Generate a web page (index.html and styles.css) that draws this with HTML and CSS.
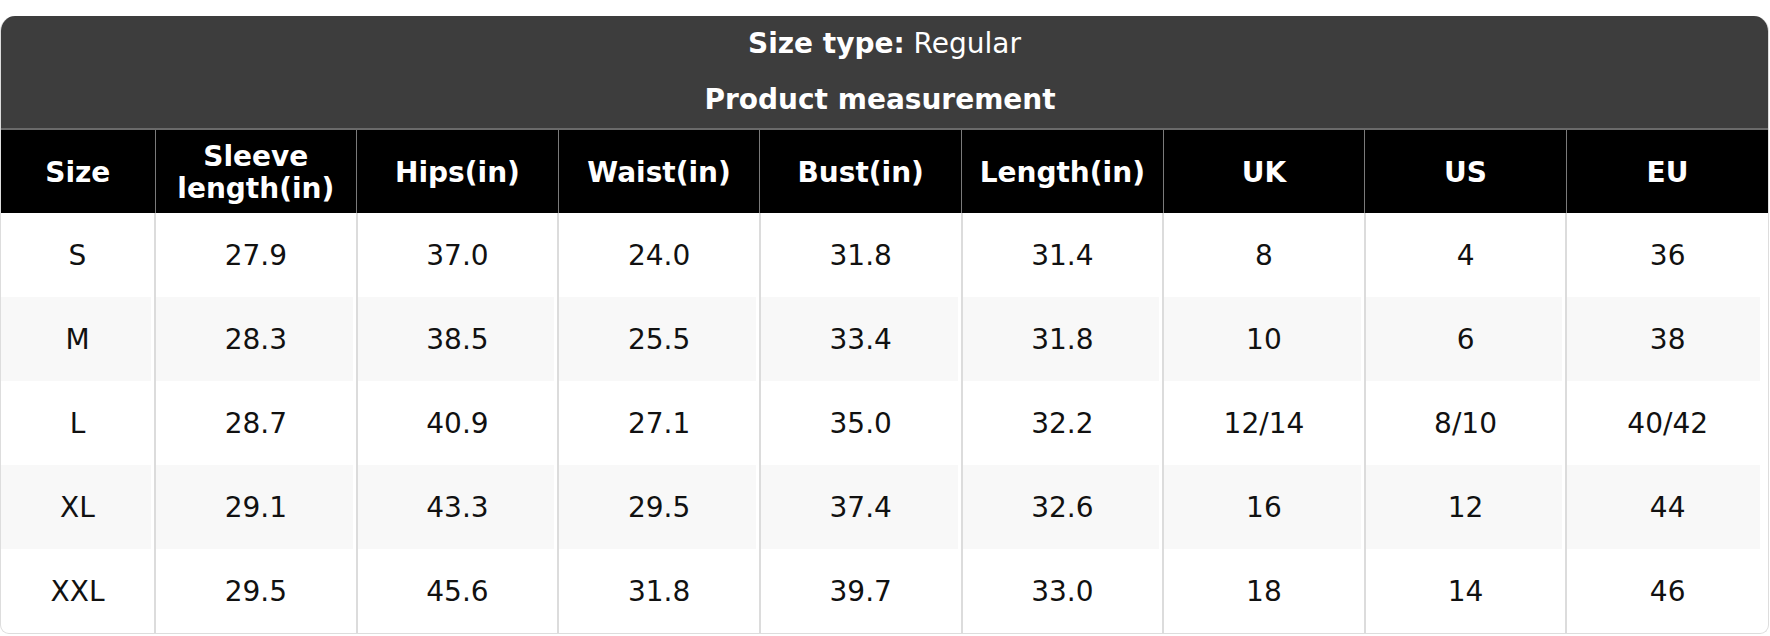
FILE: index.html
```html
<!DOCTYPE html>
<html lang="en">
<head>
<meta charset="utf-8">
<title>Size chart</title>
<link rel="stylesheet" href="styles.css">
</head>
<body>
<div class="card">
  <div class="title">
    <div class="title-line"><b>Size type:</b> Regular</div>
    <div class="title-line"><b>Product measurement</b>&nbsp;</div>
  </div>
  <table class="chart">
    <colgroup>
      <col class="col-size">
      <col><col><col><col><col><col><col><col>
    </colgroup>
    <thead>
      <tr>
        <th>Size</th>
        <th>Sleeve<br>length(in)</th>
        <th>Hips(in)</th>
        <th>Waist(in)</th>
        <th>Bust(in)</th>
        <th>Length(in)</th>
        <th>UK</th>
        <th>US</th>
        <th>EU</th>
      </tr>
    </thead>
    <tbody>
      <tr><td>S</td><td>27.9</td><td>37.0</td><td>24.0</td><td>31.8</td><td>31.4</td><td>8</td><td>4</td><td>36</td></tr>
      <tr><td>M</td><td>28.3</td><td>38.5</td><td>25.5</td><td>33.4</td><td>31.8</td><td>10</td><td>6</td><td>38</td></tr>
      <tr><td>L</td><td>28.7</td><td>40.9</td><td>27.1</td><td>35.0</td><td>32.2</td><td>12/14</td><td>8/10</td><td>40/42</td></tr>
      <tr><td>XL</td><td>29.1</td><td>43.3</td><td>29.5</td><td>37.4</td><td>32.6</td><td>16</td><td>12</td><td>44</td></tr>
      <tr><td>XXL</td><td>29.5</td><td>45.6</td><td>31.8</td><td>39.7</td><td>33.0</td><td>18</td><td>14</td><td>46</td></tr>
    </tbody>
  </table>
</div>
</body>
</html>
```
FILE: styles.css
```css
html, body {
  background: #ffffff;
}
body {
  margin: 16px 1px 0 0;
  font-family: "DejaVu Sans", Verdana, sans-serif;
  font-size: 28px;
  color: #111111;
}
.card {
  border: 1px solid #dddddd;
  border-top: 0;
  border-radius: 15px 15px 9px 9px;
  overflow: hidden;
  background: #ffffff;
}
.title {
  background: #3d3d3d;
  color: #ffffff;
  text-align: center;
  border-bottom: 2px solid #6a6a6a;
}
.title-line {
  padding: 12px 0;
  line-height: 32px;
}
.title-line b {
  font-weight: bold;
}
.chart {
  width: 100%;
  border-collapse: collapse;
  table-layout: fixed;
}
.col-size {
  width: 154px;
}
.chart th {
  background: #000000;
  color: #ffffff;
  font-weight: bold;
  line-height: 32px;
  padding: 11px 4px 8px;
  text-align: center;
  border-right: 1px solid #7a7a7a;
}
.chart td {
  padding: 27px 4px 25px;
  line-height: 32px;
  text-align: center;
  border-right: 2px solid #dcdcdc;
  color: #111111;
}
.chart th:last-child,
.chart td:last-child {
  border-right: 0;
}
.chart tbody tr:nth-child(even) td {
  background: #f8f8f8;
  box-shadow: inset -3px 0 0 #ffffff;
}
.chart tbody tr:nth-child(even) td:last-child {
  box-shadow: inset -8px 0 0 #ffffff;
}
```
